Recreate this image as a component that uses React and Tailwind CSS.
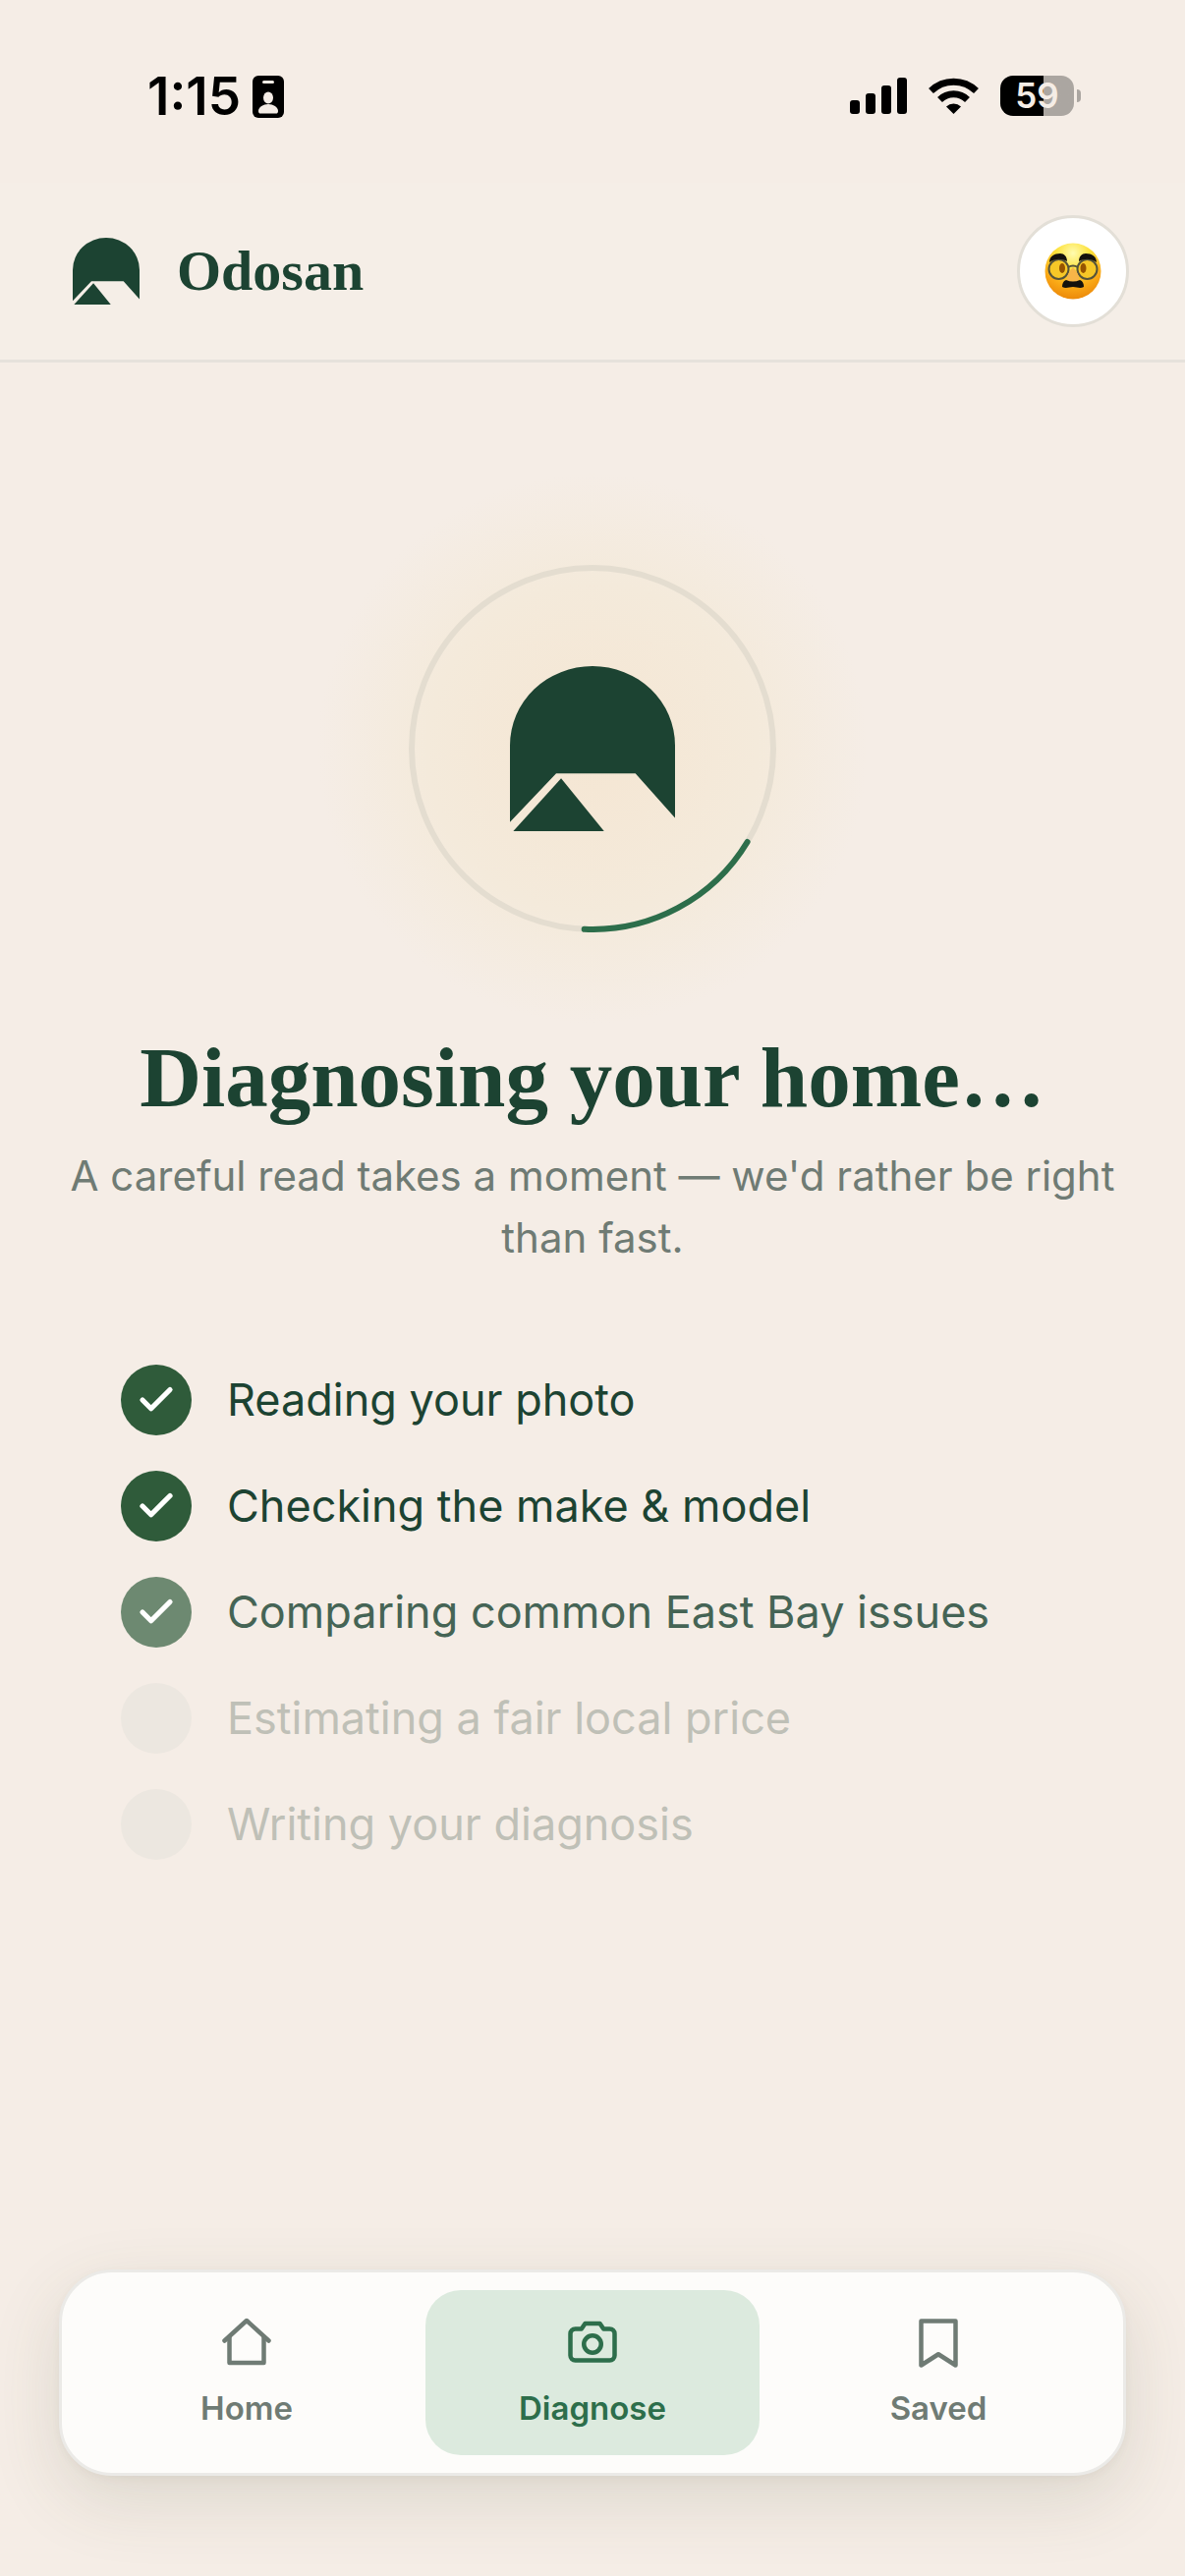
import { useState } from "react";
import { Check } from "lucide-react";

const steps = [
  { label: "Reading your photo", state: "done" },
  { label: "Checking the make & model", state: "done" },
  { label: "Comparing common East Bay issues", state: "active" },
  { label: "Estimating a fair local price", state: "pending" },
  { label: "Writing your diagnosis", state: "pending" },
];

const stepStyles = {
  done: { dot: "bg-[#2f5b3a]", text: "text-[#1c4332]" },
  active: { dot: "bg-[#6d8971]", text: "text-[#456455]" },
  pending: { dot: "bg-[#ece7e0]", text: "text-[#bfc0b7]" },
};

const LogoMark = ({ className }) => (
  <svg viewBox="0 0 100 100" className={className} fill="#1c4332" aria-hidden="true">
    <path d="M0 48A50 48 0 0 1 100 48V92L76 65H28L0 94.500z" />
    <path d="M31 68L57 100H2z" />
  </svg>
);

const HomeIcon = () => (
  <>
    <path d="M3 11l9-8.200 9 8.200" />
    <path d="M5 9.500V20h14V9.500" />
  </>
);

const CameraIcon = () => (
  <>
    <path d="M5 6.200H7.500L9 4h6L16.500 6.200H19a2 2 0 0 1 2 2V17a2 2 0 0 1-2 2H5a2 2 0 0 1-2-2V8.200a2 2 0 0 1 2-2z" />
    <circle cx="12" cy="12.400" r="3.500" />
  </>
);

const BookmarkIcon = () => <path d="M5 3h14v18l-7-4.500L5 21z" />;

const tabs = [
  { id: "home", label: "Home", Icon: HomeIcon },
  { id: "diagnose", label: "Diagnose", Icon: CameraIcon },
  { id: "saved", label: "Saved", Icon: BookmarkIcon },
];

const DisguiseFace = () => (
  <svg viewBox="0 0 58 58" className="size-[58px]" aria-hidden="true">
    <defs>
      <radialGradient id="face" cx="50%" cy="18%" r="85%">
        <stop offset="0" stopColor="#fffbb0" />
        <stop offset="0.350" stopColor="#fde23c" />
        <stop offset="0.700" stopColor="#faa916" />
        <stop offset="1" stopColor="#ea8508" />
      </radialGradient>
    </defs>
    <circle cx="29" cy="29" r="28.500" fill="url(#face)" />
    <g fill="#f6c727" stroke="#55533a" strokeWidth="2">
      <circle cx="14.500" cy="27" r="10" />
      <circle cx="43.500" cy="27" r="10" />
    </g>
    <ellipse cx="18" cy="26" rx="3" ry="5" fill="#965400" />
    <ellipse cx="39.500" cy="26" rx="3" ry="5" fill="#965400" />
    <path d="M29 25c-3 3-7 9-6 13 2 3 10 3 12 0 1-4-3-10-6-13z" fill="#f8b548" />
    <path d="M24 25q5-3 10 0" fill="none" stroke="#55533a" strokeWidth="2" />
    <path d="M5 20c0-6 5-9 11-9 4 0 7 3 7 8-6-3-12-3-18 1zM53 20c0-6-5-9-11-9-4 0-7 3-7 8 6-3 12-3 18 1z" fill="#14110d" />
    <path d="M22 38q7 3 14 0c3 1 4 4 4 7-4 2-7 0-11 0s-7 2-11 0c0-3 1-6 4-7z" fill="#14110d" />
  </svg>
);

const StatusBar = () => (
  <div className="flex h-[186px] items-start justify-between pr-[106px] pl-[150px] text-black">
    <div className="flex items-center gap-3 pt-[67px]">
      <span className="text-[53px] leading-[62px] font-semibold">1:15</span>
      <svg viewBox="0 0 32 43" className="h-[43px] w-8" aria-hidden="true">
        <rect width="32" height="43" rx="6" fill="#000" />
        <rect x="10" y="5" width="12" height="3" rx="1.500" fill="#f5ede6" />
        <ellipse cx="16" cy="22.500" rx="5" ry="6" fill="#f5ede6" />
        <path d="M6 36c0-4 5-7 10-7s10 3 10 7c0 2-1 2.500-2 2.500H8c-1 0-2-.5-2-2.500z" fill="#f5ede6" />
      </svg>
    </div>
    <div className="flex items-center gap-[22px] pt-[77px]">
      <svg viewBox="0 0 58 37" className="h-[37px] w-[58px]" aria-hidden="true">
        <rect x="0" y="23" width="10" height="14" rx="3" />
        <rect x="16" y="16" width="10" height="21" rx="3" />
        <rect x="32" y="8" width="10" height="29" rx="3" />
        <rect x="48" y="0" width="10" height="37" rx="3" />
      </svg>
      <svg viewBox="0 0 51 37" className="h-[37px] w-[51px]" aria-hidden="true">
        <path d="M25.500 37l-7.500-7.500a11 11 0 0 1 15 0z" />
        <g fill="none" stroke="#000" strokeWidth="7">
          <path d="M11.500 22.500a20 20 0 0 1 28 0" />
          <path d="M2.500 13.500a33 33 0 0 1 46 0" />
        </g>
      </svg>
      <div className="flex items-center gap-[3px]">
        <div className="flex h-[41px] w-[75px] items-center justify-center rounded-[13px] bg-linear-to-r from-black from-59% to-[#aba6a1] to-59% text-[35px] font-semibold text-[#f5ede6]">
          59
        </div>
        <div className="h-[13px] w-1 rounded-r-full bg-[#aba6a1]" />
      </div>
    </div>
  </div>
);

const Header = () => (
  <header className="flex h-[183px] items-center justify-between border-b-3 border-[#e6e2dc] bg-[#f5eee7] pr-[57px] pl-[74px]">
    <a href="#home" className="flex items-center gap-[38px]">
      <LogoMark className="size-[68px]" />
      <span className="font-['Liberation_Serif',serif] text-[58px] leading-none font-bold text-[#1c4332]">
        Odosan
      </span>
    </a>
    <button
      aria-label="Profile"
      className="flex size-[114px] items-center justify-center rounded-full border-3 border-[#e3dfd7] bg-white"
    >
      <DisguiseFace />
    </button>
  </header>
);

const Spinner = () => (
  <div className="flex size-[560px] items-center justify-center rounded-full bg-[radial-gradient(circle_closest-side,#f5e6d3_0%,#f4eadb_60%,#f5ede6_100%)]">
    <div className="grid size-[374px] place-items-center">
      <svg viewBox="-187 -187 374 374" className="col-start-1 row-start-1 size-full" fill="none" strokeWidth="6" aria-hidden="true">
        <circle r="184" stroke="#e4ddd0" />
        <path d="M157.600 95A184 184 0 0 1-8.300 183.800" stroke="#2d6e4b" strokeLinecap="round" />
      </svg>
      <LogoMark className="col-start-1 row-start-1 size-[168px]" />
    </div>
  </div>
);

const Step = ({ label, state }) => (
  <li className="flex items-center gap-9">
    <span className={`flex size-[72px] items-center justify-center rounded-full ${stepStyles[state].dot}`}>
      {state !== "pending" && <Check size={42} strokeWidth={3} className="text-white" />}
    </span>
    <span className={`text-[45px] leading-[54px] ${stepStyles[state].text}`}>{label}</span>
  </li>
);

const TabBar = () => {
  const [activeTab, setActiveTab] = useState("diagnose");

  return (
    <nav className="mx-[60px] mb-[102px] grid grid-cols-3 gap-3 rounded-[54px] border-3 border-[#ebeae7] bg-[#fdfcfa] p-[18px] shadow-[0_24px_72px_rgba(70,80,50,0.14),0_3px_9px_rgba(70,80,50,0.05)]">
      {tabs.map(({ id, label, Icon }) => (
        <button
          key={id}
          onClick={() => setActiveTab(id)}
          className={`flex h-[168px] flex-col items-center justify-center gap-4 rounded-[36px] pb-1 ${
            activeTab === id ? "bg-[#dceade] text-[#2d6e4b]" : "text-[#6f7b74]"
          }`}
        >
          <svg
            viewBox="0 0 24 24"
            className="size-[60px]"
            fill="none"
            stroke="currentColor"
            strokeWidth="1.800"
            strokeLinecap="round"
            strokeLinejoin="round"
            aria-hidden="true"
          >
            <Icon />
          </svg>
          <span className="text-[33px] leading-10 font-semibold">{label}</span>
        </button>
      ))}
    </nav>
  );
};

const App = () => (
  <div className="flex min-h-screen flex-col bg-[#f5ede6] font-['Inter',sans-serif]">
    <StatusBar />
    <Header />
    <main className="flex flex-1 flex-col items-center px-[60px] pt-[113px]">
      <Spinner />
      <h1 className="text-center font-['Liberation_Serif',serif] text-[87px] leading-[110px] font-bold text-[#1c4332]">
        Diagnosing your home…
      </h1>
      <p className="mt-[13px] text-center text-[42px] leading-[63px] text-[#6f7b74]">
        A careful read takes a moment — we'd rather be right than fast.
      </p>
      <ul className="mt-[98px] flex w-full flex-col gap-9 px-[63px]">
        {steps.map((step) => (
          <Step key={step.label} {...step} />
        ))}
      </ul>
    </main>
    <TabBar />
  </div>
);

export default App;
